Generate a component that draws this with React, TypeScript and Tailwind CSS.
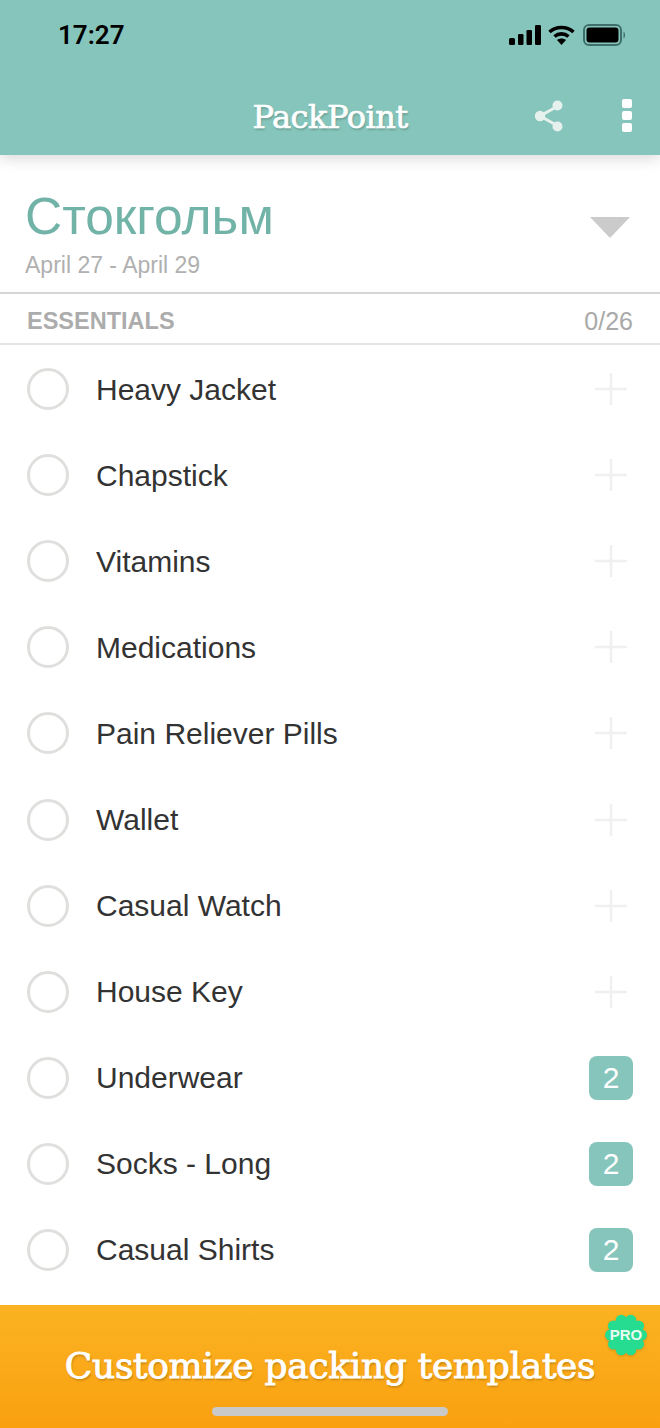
import React from 'react';

const items = [
  { id: 1, name: 'Heavy Jacket', count: 0 },
  { id: 2, name: 'Chapstick', count: 0 },
  { id: 3, name: 'Vitamins', count: 0 },
  { id: 4, name: 'Medications', count: 0 },
  { id: 5, name: 'Pain Reliever Pills', count: 0 },
  { id: 6, name: 'Wallet', count: 0 },
  { id: 7, name: 'Casual Watch', count: 0 },
  { id: 8, name: 'House Key', count: 0 },
  { id: 9, name: 'Underwear', count: 2 },
  { id: 10, name: 'Socks - Long', count: 2 },
  { id: 11, name: 'Casual Shirts', count: 2 },
];

const bumps = Array.from({ length: 10 }, (_, i) => (i * Math.PI) / 5);

const StatusIcons = () => (
  <div className="flex items-center gap-[7px]">
    <svg width="32" height="20" viewBox="0 0 32 20" fill="#000">
      <rect x="0" y="13" width="6" height="7" rx="1.5" />
      <rect x="9" y="9" width="5.5" height="11" rx="1.2" />
      <rect x="17.5" y="5" width="5.5" height="15" rx="1.2" />
      <rect x="26" y="0" width="6" height="20" rx="1.2" />
    </svg>
    <svg width="27" height="20" viewBox="0 0 27 20" fill="none" stroke="#000" strokeWidth="3.6">
      <path d="M1.5 7 C8 1 19 1 25.5 7" />
      <path d="M6.5 11.5 C10.5 8 16.5 8 20.5 11.5" />
      <path d="M9 15 L13.5 20 L18 15 C15.5 13 11.5 13 9 15 Z" fill="#000" stroke="none" />
    </svg>
    <svg width="43" height="22" viewBox="0 0 43 22" fill="none" className="ml-px">
      <rect x="1" y="1" width="37" height="20" rx="5" stroke="#3f6f6a" strokeWidth="2" />
      <rect x="3.5" y="3.5" width="32" height="15" rx="3" fill="#000" />
      <path d="M40.5 7.5 C42.5 8.5 42.5 13.5 40.5 14.5 Z" fill="#3f6f6a" />
    </svg>
  </div>
);

const ShareIcon = () => (
  <svg width="30" height="32" viewBox="0 0 30 32" fill="#e6f1ee" stroke="#e6f1ee">
    <path d="M24 6 L6 16 L24 26" fill="none" strokeWidth="3" />
    <circle cx="6" cy="16" r="5.2" stroke="none" />
    <circle cx="23.5" cy="5.5" r="5" stroke="none" />
    <circle cx="23.5" cy="26.5" r="5" stroke="none" />
  </svg>
);

const PlusIcon = () => (
  <svg width="32" height="32" viewBox="0 0 32 32" stroke="#f0f0f0" strokeWidth="2.5">
    <path d="M16 0 V32 M0 16 H32" />
  </svg>
);

// scalloped edge of the PRO sticker
const ProBadge = () => (
  <div className="absolute right-[13px] top-[9px] flex h-[42px] w-[42px] items-center justify-center">
    <svg width="42" height="42" viewBox="0 0 42 42" fill="#26dc90" className="absolute inset-0 drop-shadow-[0_1px_1px_rgba(0,0,0,0.15)]">
      <circle cx="21" cy="21" r="17" />
      {bumps.map((a) => (
        <circle key={a} cx={21 + 15.5 * Math.cos(a)} cy={21 + 15.5 * Math.sin(a)} r="5.5" />
      ))}
    </svg>
    <span className="relative text-[15px] font-bold text-[#e8fbf2]">PRO</span>
  </div>
);

export default function App() {
  return (
    <div className="relative flex h-[1428px] w-[660px] flex-col overflow-hidden bg-white font-['Liberation_Sans',sans-serif]">
      <header className="relative z-10 h-[155px] shrink-0 bg-[#86c5bb] shadow-[0_3px_14px_rgba(0,0,0,0.16)]">
        <div className="flex h-[70px] items-center justify-between pl-[58px] pr-[34px]">
          <span className="font-['Roboto',sans-serif] text-[26px] font-semibold text-black">17:27</span>
          <StatusIcons />
        </div>
        <div className="relative flex h-[85px] items-start justify-center pt-[22px]">
          <h1 className="font-['DejaVu_Serif',serif] text-[32px] font-normal leading-[50px] tracking-[-0.5px] text-white [-webkit-text-stroke:0.7px_white] [text-shadow:1px_2px_2px_rgba(0,0,0,0.2)]">
            PackPoint
          </h1>
          <div className="absolute right-[96px] top-[30px]">
            <ShareIcon />
          </div>
          <div className="absolute right-[28px] top-[29px] flex flex-col gap-[3px]">
            <span className="h-[9px] w-[10px] rounded-[2px] bg-white" />
            <span className="h-[9px] w-[10px] rounded-[2px] bg-white" />
            <span className="h-[9px] w-[10px] rounded-[2px] bg-white" />
          </div>
        </div>
      </header>

      <section className="flex h-[139px] shrink-0 items-start justify-between border-b-2 border-[#d6d6d4] pl-[25px] pr-[30px] pt-[33px]">
        <div>
          <h2 className="text-[51.5px] font-normal leading-[56px] text-[#72b3a8]">Стокгольм</h2>
          <p className="mt-[7px] text-[23px] leading-[28px] text-[#b0b0b0]">April 27 - April 29</p>
        </div>
        <div className="mt-[29px] h-0 w-0 border-x-[20px] border-t-[21px] border-x-transparent border-t-[#cbcbcb]" />
      </section>

      <div className="flex h-[51px] shrink-0 items-center justify-between border-b-2 border-[#e4e4e4] px-[27px] pt-[6px]">
        <span className="text-[23.5px] font-bold text-[#acacac]">ESSENTIALS</span>
        <span className="text-[25px] text-[#a9a9a9]">0/26</span>
      </div>

      <ul className="flex-1 overflow-hidden pt-px">
        {items.map((item) => (
          <li key={item.id} className="flex h-[86.1px] items-center pl-[27px] pr-[27px]">
            <span className="h-[42px] w-[42px] shrink-0 rounded-full border-[3px] border-[#dfdfdd]" />
            <span className="ml-[27px] flex-1 text-[30px] text-[#333333]">{item.name}</span>
            {item.count > 0 ? (
              <span className="flex h-[44px] w-[44px] items-center justify-center rounded-[8px] bg-[#86c5bb] text-[30px] text-white">
                {item.count}
              </span>
            ) : (
              <span className="mr-[6px]">
                <PlusIcon />
              </span>
            )}
          </li>
        ))}
      </ul>

      <div className="relative flex h-[123px] shrink-0 justify-center bg-gradient-to-b from-[#fab322] to-[#faa00e] pt-[36px]">
        <span className="font-['DejaVu_Serif',serif] text-[36px] font-normal leading-[50px] tracking-[-0.3px] text-white [-webkit-text-stroke:0.9px_white] [text-shadow:1px_2px_2px_rgba(0,0,0,0.22)]">
          Customize packing templates
        </span>
        <ProBadge />
        <div className="absolute bottom-[12px] left-[212px] h-[9px] w-[236px] rounded-full bg-[#c9c9c9]" />
      </div>
    </div>
  );
}
